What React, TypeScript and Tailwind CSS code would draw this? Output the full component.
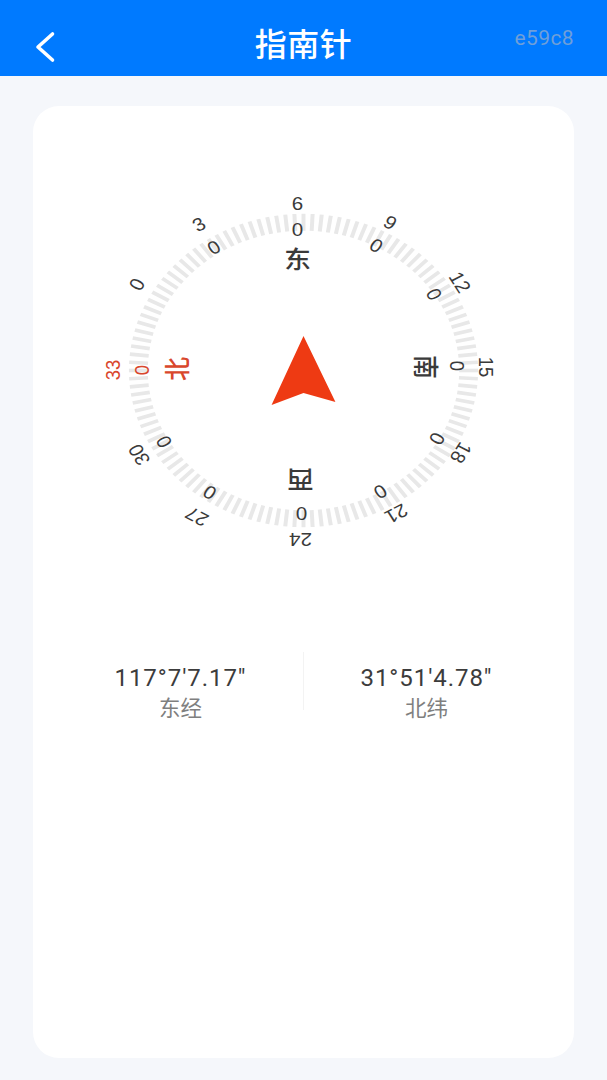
import React from 'react'

const cjk = '"Noto Sans CJK SC", sans-serif'
const dark = '#3a3a3a'
const red = '#d9472c'

// Dial is a little wider than tall in the picture, so labels get the same stretch
const stretch = 1.114

type DialLabel = { text: string; x: number; y: number; rot: number; color?: string; cjk?: boolean }

const labels: DialLabel[] = [
  { text: '6', x: 297, y: 203, rot: 0 },
  { text: '0', x: 297, y: 229, rot: 0 },
  { text: '东', x: 297, y: 259, rot: 0, cjk: true },
  { text: '3', x: 198, y: 224, rot: -30 },
  { text: '0', x: 213, y: 247, rot: -30 },
  { text: '0', x: 136, y: 284, rot: -60 },
  { text: '33', x: 112, y: 370, rot: -90, color: red },
  { text: '0', x: 141, y: 370, rot: -90, color: red },
  { text: '北', x: 177, y: 369, rot: -90, color: red, cjk: true },
  { text: '9', x: 390, y: 222, rot: 30 },
  { text: '0', x: 376, y: 245, rot: 30 },
  { text: '12', x: 460, y: 282, rot: 60 },
  { text: '0', x: 434, y: 294, rot: 60 },
  { text: '15', x: 486, y: 367, rot: 90 },
  { text: '0', x: 457, y: 366, rot: 90 },
  { text: '南', x: 425, y: 367, rot: 90, cjk: true },
  { text: '18', x: 461, y: 453, rot: 120 },
  { text: '0', x: 437, y: 439, rot: 120 },
  { text: '21', x: 396, y: 514, rot: 150 },
  { text: '0', x: 380, y: 492, rot: 150 },
  { text: '24', x: 300, y: 540, rot: 180 },
  { text: '0', x: 301, y: 514, rot: 180 },
  { text: '西', x: 300, y: 480, rot: 180, cjk: true },
  { text: '27', x: 196, y: 517, rot: 210 },
  { text: '0', x: 209, y: 493, rot: 210 },
  { text: '30', x: 138, y: 455, rot: 240 },
  { text: '0', x: 163, y: 442, rot: 240 },
]

const ticks = Array.from({ length: 120 }, (_, i) => i * 3)

const Compass: React.FC = () => (
  <svg viewBox="32 170 542 400" className="block w-full h-[400px]">
    <g transform={`translate(303 370.5) scale(${stretch} 1)`}>
      {ticks.map((a) => (
        <line key={a} x1={0} y1={-140} x2={0} y2={-157} stroke="#e8e8e8" strokeWidth={3.6} transform={`rotate(${a})`} />
      ))}
    </g>
    {labels.map((l, i) => (
      <text
        key={i}
        transform={`translate(${l.x} ${l.y}) scale(${stretch} 1) rotate(${l.rot})`}
        y={l.cjk ? -2 : 0}
        textAnchor="middle"
        dominantBaseline="central"
        fill={l.color || dark}
        fontSize={l.cjk ? 24 : 18.5}
        fontWeight={l.cjk ? 500 : 400}
        fontFamily={l.cjk ? cjk : '"Liberation Sans", sans-serif'}
      >
        {l.text}
      </text>
    ))}
    <path d="M303 336 L335 402 L303 393 L271 405 Z" fill="#ee3a13" />
  </svg>
)

const Coord: React.FC<{ value: string; label: string }> = ({ value, label }) => (
  <div className="flex-1 flex flex-col items-center pt-[11px]">
    <span className="text-[24px] leading-[30px] tracking-[0.95px] text-[#3c3c3c] font-['Roboto',sans-serif]">{value}</span>
    <span className="-mt-[1px] text-[21.5px] leading-[30px] text-[#7f7f7f] font-['Noto_Sans_CJK_SC',sans-serif]">{label}</span>
  </div>
)

export default function App() {
  return (
    <div className="flex flex-col w-[607px] h-[1080px] bg-[#f5f7fb] overflow-hidden">
      {/* Header */}
      <div className="relative flex items-center justify-between h-[76px] pl-[34px] pr-[33px] bg-[#007aff] shrink-0">
        <svg width="24" height="32" viewBox="0 0 24 32" className="mt-[18px]">
          <path d="M18.5 3 L4 16 L18.5 29" fill="none" stroke="#fff" strokeWidth="3.6" strokeLinecap="round" strokeLinejoin="round" />
        </svg>
        <span className="absolute left-0 right-0 top-[20px] text-center text-[32px] leading-[44px] font-medium text-white tracking-[0.5px] font-['Noto_Sans_CJK_SC',sans-serif]">
          指南针
        </span>
        <span className="text-[21px] leading-[28px] tracking-[0.4px] text-[#6f9fd8] font-['Roboto',sans-serif]">e59c8</span>
      </div>

      {/* Card */}
      <div className="flex-1 flex flex-col mx-[33px] mt-[30px] mb-[22px] pt-[64px] bg-white rounded-[26px]">
        <Compass />
        <div className="flex mt-[82px] mx-[25px]">
          <Coord value={'117°7\'7.17"'} label="东经" />
          <div className="w-px h-[58px] bg-[#f3f3f3]" />
          <Coord value={'31°51\'4.78"'} label="北纬" />
        </div>
      </div>
    </div>
  )
}
